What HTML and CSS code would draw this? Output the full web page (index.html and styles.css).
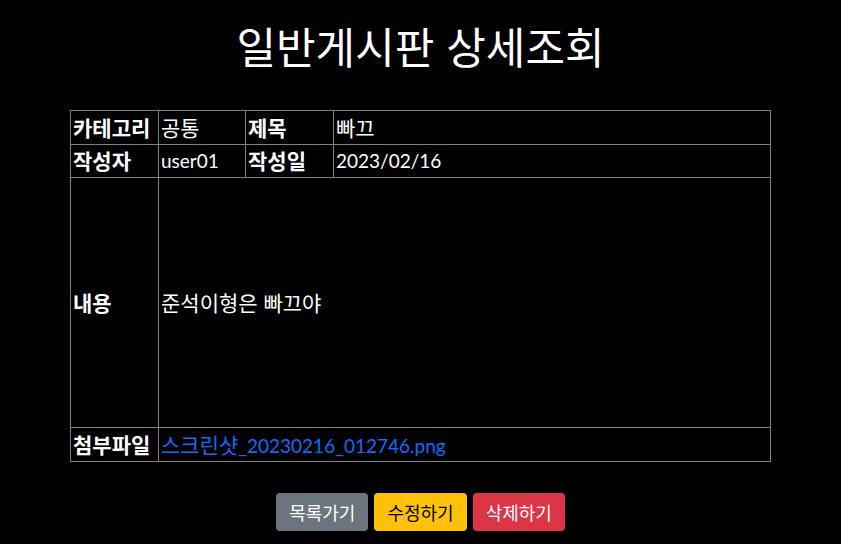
FILE: index.html
```html
<!DOCTYPE html>
<html lang="ko">
<head>
<meta charset="utf-8">
<title>일반게시판 상세조회</title>
<link rel="stylesheet" href="styles.css">
</head>
<body>
<div class="content">
  <h1 class="title">일반게시판 상세조회</h1>
  <table class="detail">
    <tr class="row-sm">
      <th class="c1"><span class="ko">카테고리</span></th>
      <td class="c2"><span class="ko">공통</span></td>
      <th class="c3"><span class="ko">제목</span></th>
      <td class="c4"><span class="ko">빠끄</span></td>
    </tr>
    <tr class="row-sm2">
      <th><span class="ko">작성자</span></th>
      <td>user01</td>
      <th><span class="ko">작성일</span></th>
      <td>2023/02/16</td>
    </tr>
    <tr class="row-lg">
      <th><span class="ko">내용</span></th>
      <td colspan="3"><span class="ko">준석이형은 빠끄야</span></td>
    </tr>
    <tr class="row-sm">
      <th><span class="ko">첨부파일</span></th>
      <td colspan="3"><a class="file" href="#"><span class="ko">스크린샷</span>_20230216_012746.png</a></td>
    </tr>
  </table>
  <div class="actions">
    <button class="btn btn-gray">목록가기</button>
    <button class="btn btn-yellow">수정하기</button>
    <button class="btn btn-red">삭제하기</button>
  </div>
</div>
</body>
</html>
```
FILE: styles.css
```css
html, body {
  margin: 0;
  padding: 0;
  background: #000;
  color: #fff;
  font-family: "Noto Sans CJK KR", "Noto Sans", sans-serif;
}
.content {
  display: flex;
  flex-direction: column;
  align-items: center;
  padding-top: 16px;
}
.title {
  margin: 0 0 36px 0;
  font-size: 43px;
  font-weight: 400;
  line-height: 58px;
}
.detail {
  border-collapse: collapse;
  width: 701px;
  font-family: "Lato", "Noto Sans CJK KR", sans-serif;
  font-size: 19px;
}
.detail th, .detail td {
  border: 1px solid #808080;
  padding: 0 2px;
  text-align: left;
  vertical-align: middle;
  line-height: 24px;
}
.detail th { font-weight: 700; }
.ko {
  font-family: "Noto Sans CJK KR", sans-serif;
  font-size: 21px;
}
.c1 { width: 83px; }
.c2 { width: 82px; }
.c3 { width: 83px; }
.row-sm { height: 34px; }
.row-sm2 { height: 33px; }
.row-lg { height: 250px; }
.file { color: #0d6efd; text-decoration: none; }
.actions {
  display: flex;
  gap: 6px;
  margin-top: 31px;
}
.btn {
  font-family: "Noto Sans CJK KR", "Noto Sans", sans-serif;
  font-size: 18px;
  line-height: 24px;
  padding: 6px 12px;
  border: 1px solid transparent;
  border-radius: 4px;
  color: #fff;
}
.btn-gray { background: #6c757d; }
.btn-yellow { background: #ffc107; color: #000; }
.btn-red { background: #dc3545; }
```
